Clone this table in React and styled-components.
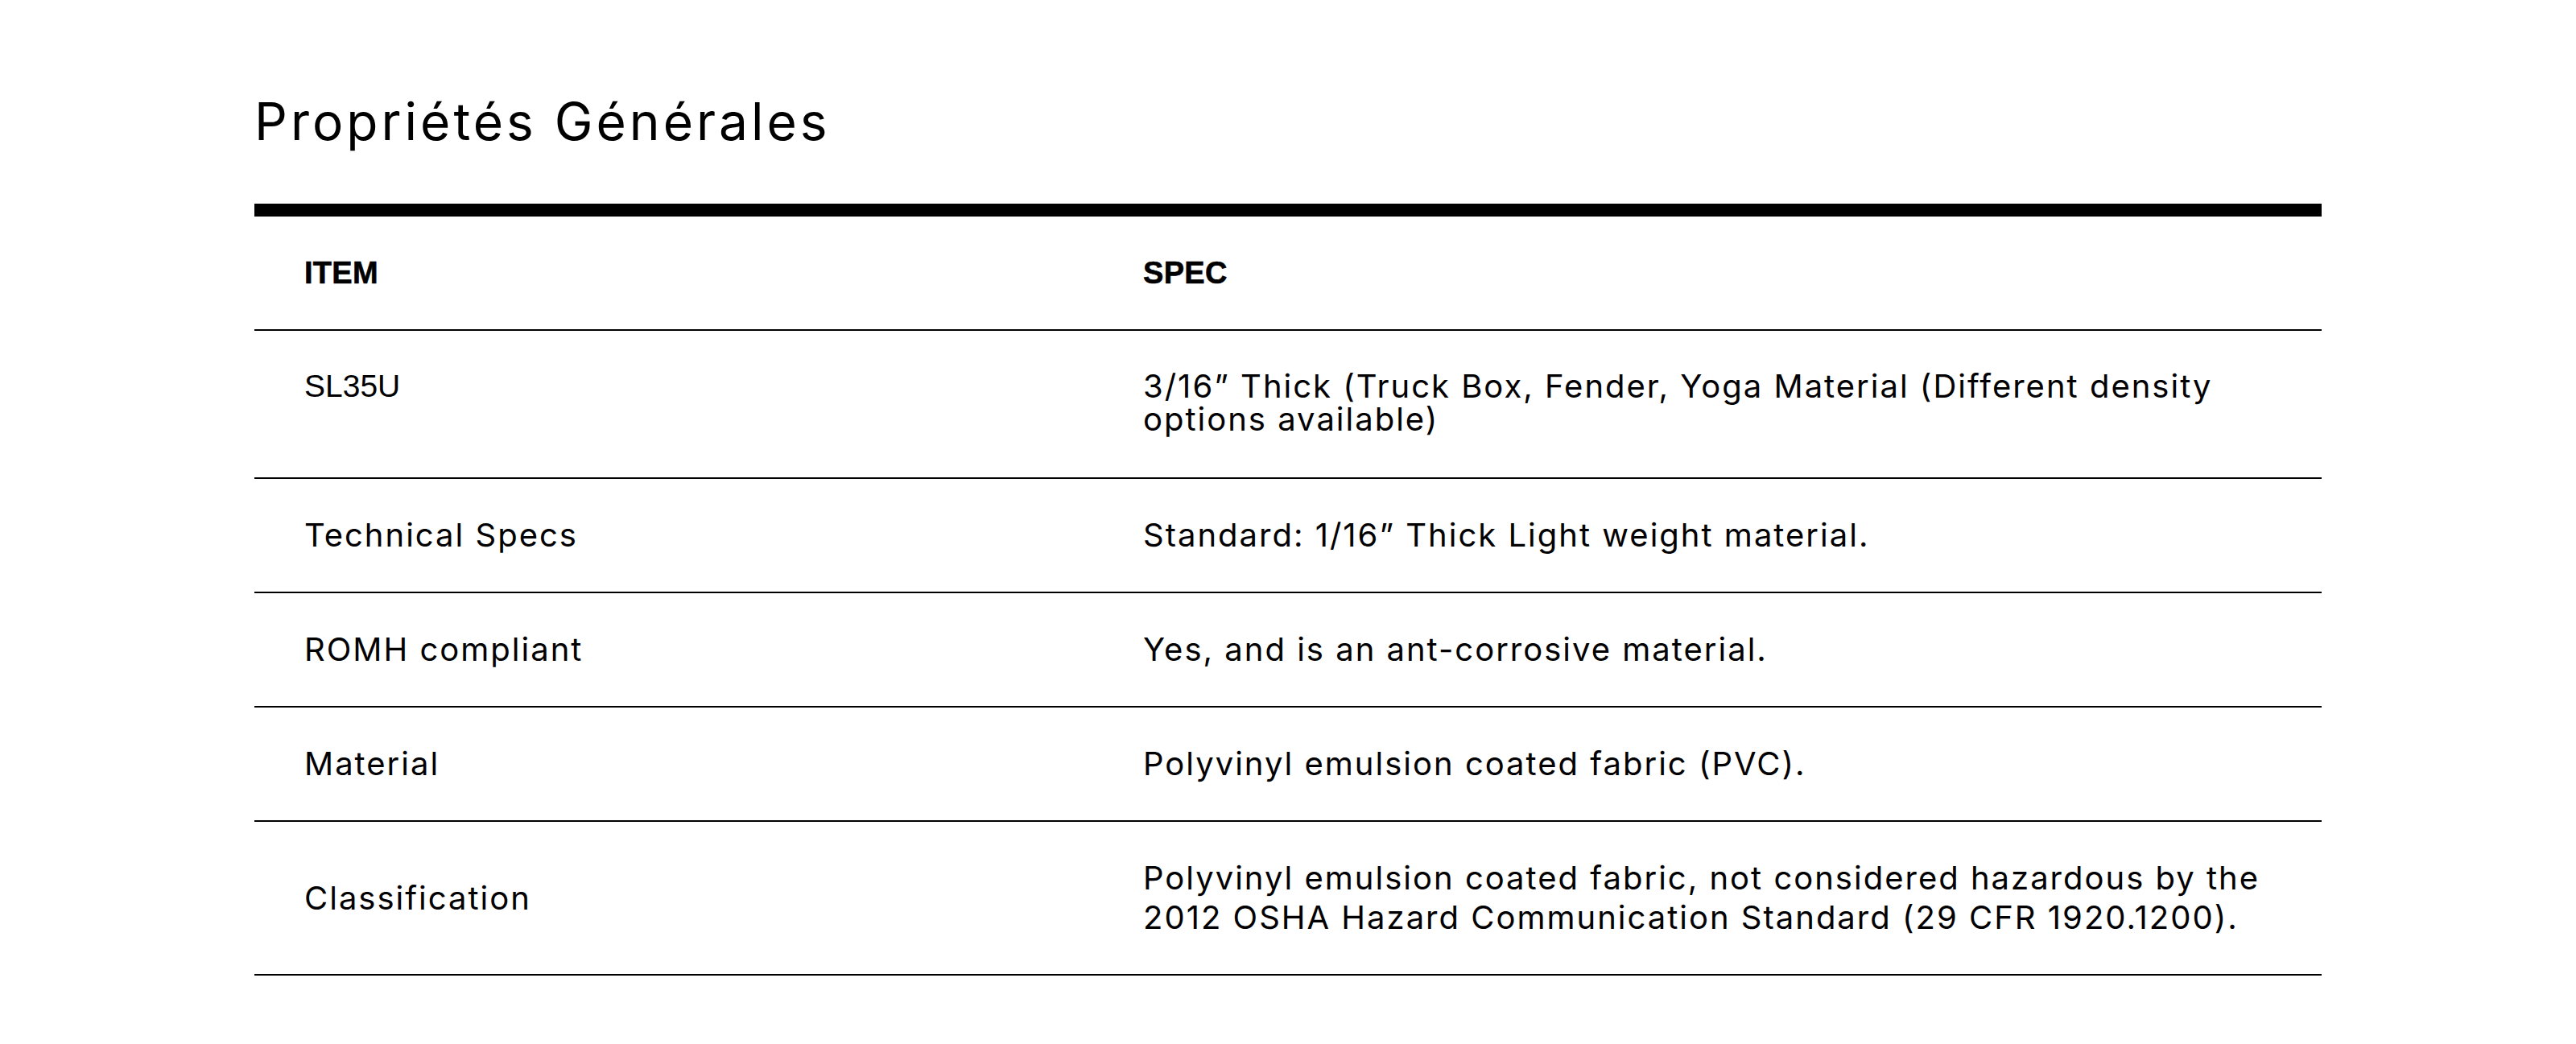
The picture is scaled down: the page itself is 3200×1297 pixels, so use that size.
import React from "react";
import styled, { createGlobalStyle, css } from "styled-components";

const Global = createGlobalStyle`
  html, body { margin: 0; padding: 0; background: #fff; }
  body { font-family: Inter, "Noto Sans", sans-serif; color: #000; }
`;

const Page = styled.main`
  width: 2568px;
  margin: 0 auto;
  padding-top: 115px;
`;

const Title = styled.h2`
  margin: 0 0 66px;
  font-family: Inter, "Noto Sans", sans-serif;
  font-size: 64px;
  line-height: 72px;
  font-weight: 400;
  letter-spacing: 4px;
`;

const Table = styled.div`
  border-top: 16px solid #000;
`;

const rowVariants = {
  head: css`
    padding: 46px 0;
    align-items: center;
  `,
  top: css`
    padding: 48px 0 52px;
    align-items: start;
  `,
  body: css`
    padding: 45px 0 46px;
    align-items: center;
  `,
};

const Row = styled.div`
  display: grid;
  grid-template-columns: 1042px 1fr;
  border-bottom: 2px solid #000;
  ${(p) => rowVariants[p.$variant || "body"]}
`;

const HeadCell = styled.div`
  padding: 0 62px;
  font-family: "Liberation Sans", Arial, sans-serif;
  font-size: 38px;
  font-weight: 700;
  line-height: 48px;
  letter-spacing: 0.3px;
  -webkit-text-stroke: 0.6px #000;
`;

const Cell = styled.div`
  padding: 0 62px;
  font-family: ${(p) => (p.$grotesk ? `"Liberation Sans", Arial, sans-serif` : `Inter, "Noto Sans", sans-serif`)};
  font-size: ${(p) => (p.$grotesk ? "39px" : "40px")};
  font-weight: 400;
  letter-spacing: ${(p) => (p.$grotesk ? "0" : "2px")};
  line-height: ${(p) => (p.$tight ? "41px" : "49px")};
  white-space: nowrap;
`;

const rows = [
  {
    item: "SL35U",
    grotesk: true,
    spec: ["3/16” Thick (Truck Box, Fender, Yoga Material (Different density", "options available)"],
    variant: "top",
  },
  { item: "Technical Specs", spec: ["Standard: 1/16” Thick Light weight material."] },
  { item: "ROMH compliant", spec: ["Yes, and is an ant-corrosive material."] },
  { item: "Material", spec: ["Polyvinyl emulsion coated fabric (PVC)."] },
  {
    item: "Classification",
    spec: [
      "Polyvinyl emulsion coated fabric, not considered hazardous by the",
      "2012 OSHA Hazard Communication Standard (29 CFR 1920.1200).",
    ],
  },
];

export default function App() {
  return (
    <>
      <Global />
      <Page>
        <Title>Propriétés Générales</Title>
        <Table>
          <Row $variant="head">
            <HeadCell>ITEM</HeadCell>
            <HeadCell>SPEC</HeadCell>
          </Row>
          {rows.map((r) => {
            const tight = r.variant === "top";
            return (
              <Row key={r.item} $variant={r.variant}>
                <Cell $tight={tight} $grotesk={r.grotesk}>
                  {r.item}
                </Cell>
                <Cell $tight={tight}>
                  {r.spec.map((line, i) => (
                    <React.Fragment key={i}>
                      {i > 0 && <br />}
                      {line}
                    </React.Fragment>
                  ))}
                </Cell>
              </Row>
            );
          })}
        </Table>
      </Page>
    </>
  );
}
